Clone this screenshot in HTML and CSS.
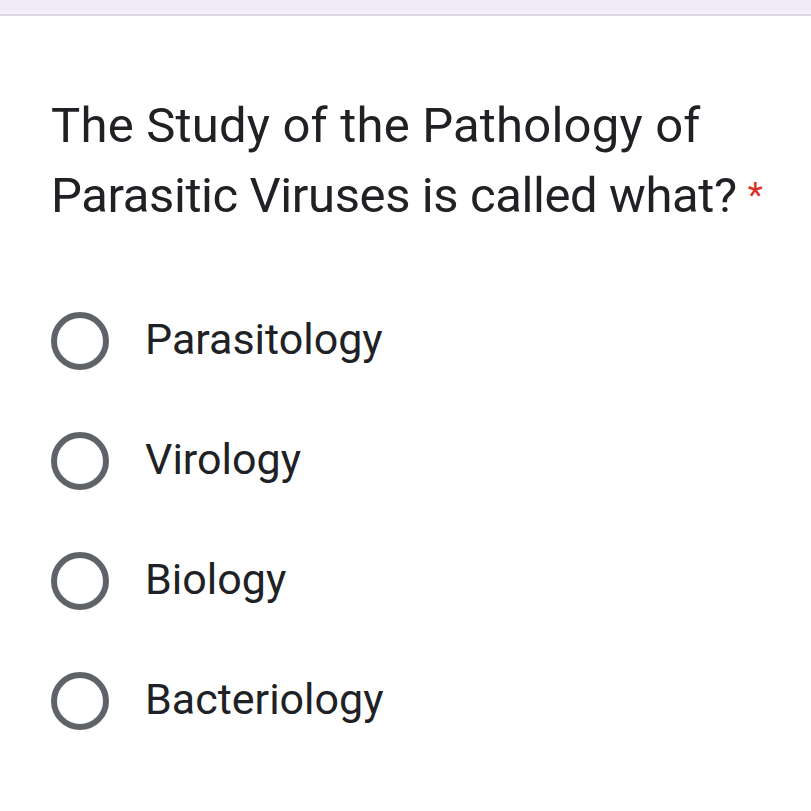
FILE: index.html
```html
<!DOCTYPE html>
<html>
<head>
<meta charset="utf-8">
<link rel="stylesheet" href="styles.css">
</head>
<body>
<div class="topbar"></div>
<main class="card">
  <div class="question">
    <span class="line line1">The Study of the Pathology of</span>
    <span class="line line2">Parasitic Viruses is called what?<span class="req">*</span></span>
  </div>
  <div class="options">
    <label class="option"><span class="radio"></span><span class="label">Parasitology</span></label>
    <label class="option"><span class="radio"></span><span class="label">Virology</span></label>
    <label class="option"><span class="radio"></span><span class="label">Biology</span></label>
    <label class="option"><span class="radio"></span><span class="label">Bacteriology</span></label>
  </div>
</main>
</body>
</html>
```
FILE: styles.css
```css
html, body {
  margin: 0;
  padding: 0;
  background: #ffffff;
}
body {
  width: 811px;
  height: 811px;
  overflow: hidden;
  font-family: Roboto, "Liberation Sans", sans-serif;
  color: #202124;
}
.topbar {
  height: 10px;
  background: #eeebf6;
  border-bottom: 4px solid #f2eff8;
  box-shadow: 0 2px 0 #dcd8e2;
  margin-bottom: 2px;
}
.card {
  padding: 75px 0 0 51px;
}
.question {
  font-size: 49px;
  line-height: 70px;
  color: #202124;
}
.line {
  display: block;
  white-space: nowrap;
}
.line1 {
  letter-spacing: 0.2px;
}
.line2 {
  letter-spacing: -0.4px;
}
.req {
  display: inline-block;
  margin-left: 11px;
  font-size: 35px;
  line-height: 1;
  vertical-align: 5px;
  letter-spacing: 0;
  color: #d93025;
}
.options {
  margin-top: 50px;
  display: flex;
  flex-direction: column;
}
.option {
  height: 120px;
  display: flex;
  align-items: center;
}
.radio {
  box-sizing: border-box;
  width: 58px;
  height: 58px;
  border: 6px solid #5f6368;
  border-radius: 50%;
  flex: none;
}
.label {
  margin-left: 36px;
  margin-bottom: 4px;
  font-size: 43px;
  color: #202124;
}
```
